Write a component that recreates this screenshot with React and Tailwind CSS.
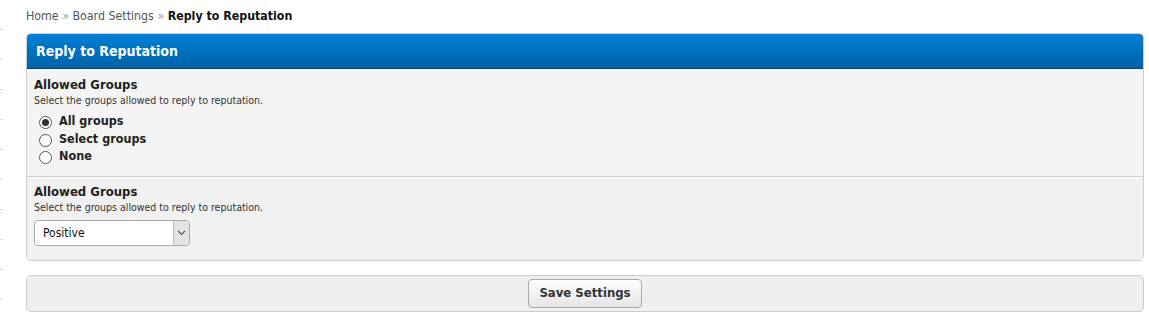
import { useState } from 'react';

const font = { fontFamily: '"DejaVu Sans Condensed", Tahoma, "DejaVu Sans", sans-serif' };

const Radio = ({ checked, label, onClick }) => (
  <label className="flex items-center h-[17.5px] cursor-pointer" onClick={onClick}>
    <span className="w-[13px] h-[13px] rounded-full border border-[#555] bg-white flex items-center justify-center ml-[5px] mr-[7px] mt-[2px]">
      {checked && <span className="w-[7px] h-[7px] rounded-full bg-[#333]" />}
    </span>
    <span className="text-[12.5px] font-bold text-[#222]">{label}</span>
  </label>
);

const App = () => {
  const [group, setGroup] = useState('all');

  return (
    <div
      className="w-[1149px] h-[314px] bg-white relative bg-[repeating-linear-gradient(to_bottom,transparent_0,transparent_29px,#d6d6d6_29px,#d6d6d6_30px)] bg-[length:3px_100%] bg-no-repeat"
      style={font}
    >
      <div className="pl-[26px] pr-[5px] pt-[7px]">
        {/* Breadcrumb */}
        <div className="text-[12.3px] text-[#555] h-[18px] leading-[18px]">
          <span>Home</span>
          <span className="text-[#999]"> » </span>
          <span>Board Settings</span>
          <span className="text-[#999]"> » </span>
          <span className="font-bold text-[#111]">Reply to Reputation</span>
        </div>

        {/* Settings panel */}
        <div className="mt-[8px] border border-[#ccc] rounded-[5px] bg-[#f4f4f4] overflow-hidden">
          <div className="h-[35px] bg-gradient-to-b from-[#0080d6] to-[#0063a7] border-b border-[#1f3d52] flex items-center px-[9px]">
            <span className="text-white font-bold text-[14px]">Reply to Reputation</span>
          </div>

          <div className="px-[7px] pt-[8px] pb-[10px] border-b border-[#ccc]">
            <div className="text-[13px] font-bold text-[#222] leading-[16px]">Allowed Groups</div>
            <div className="text-[10.5px] text-[#333] leading-[14px]">Select the groups allowed to reply to reputation.</div>
            <div className="mt-[6px] flex flex-col">
              <Radio checked={group === 'all'} label="All groups" onClick={() => setGroup('all')} />
              <Radio checked={group === 'select'} label="Select groups" onClick={() => setGroup('select')} />
              <Radio checked={group === 'none'} label="None" onClick={() => setGroup('none')} />
            </div>
          </div>

          <div className="px-[7px] pt-[6px] pb-[14px] bg-[#f1f1f1] border-t border-white">
            <div className="text-[13px] font-bold text-[#222] leading-[16px]">Allowed Groups</div>
            <div className="text-[10.5px] text-[#333] leading-[14px]">Select the groups allowed to reply to reputation.</div>
            <div className="mt-[6px] w-[156px] h-[26px] border border-[#aaa] rounded-[4px] bg-white flex overflow-hidden">
              <span className="flex-1 text-[12px] text-[#111] pl-[8px] flex items-center">Positive</span>
              <span className="w-[16px] bg-[#e3e3e3] border-l border-[#bbb] flex items-center justify-center">
                <svg width="9" height="6" viewBox="0 0 9 6">
                  <path d="M1 1 L4.5 4.5 L8 1" fill="none" stroke="#555" strokeWidth="1.2" />
                </svg>
              </span>
            </div>
          </div>
        </div>

        {/* Submit bar */}
        <div className="mt-[14px] h-[37px] border border-[#ccc] rounded-[5px] bg-[#efefef] flex items-center justify-center">
          <button className="h-[29px] px-[10px] border border-[#a8a8a8] rounded-[4px] bg-gradient-to-b from-[#ffffff] to-[#e4e4e4] text-[13px] font-bold text-[#333]">
            Save Settings
          </button>
        </div>
      </div>
    </div>
  );
};

export default App;
